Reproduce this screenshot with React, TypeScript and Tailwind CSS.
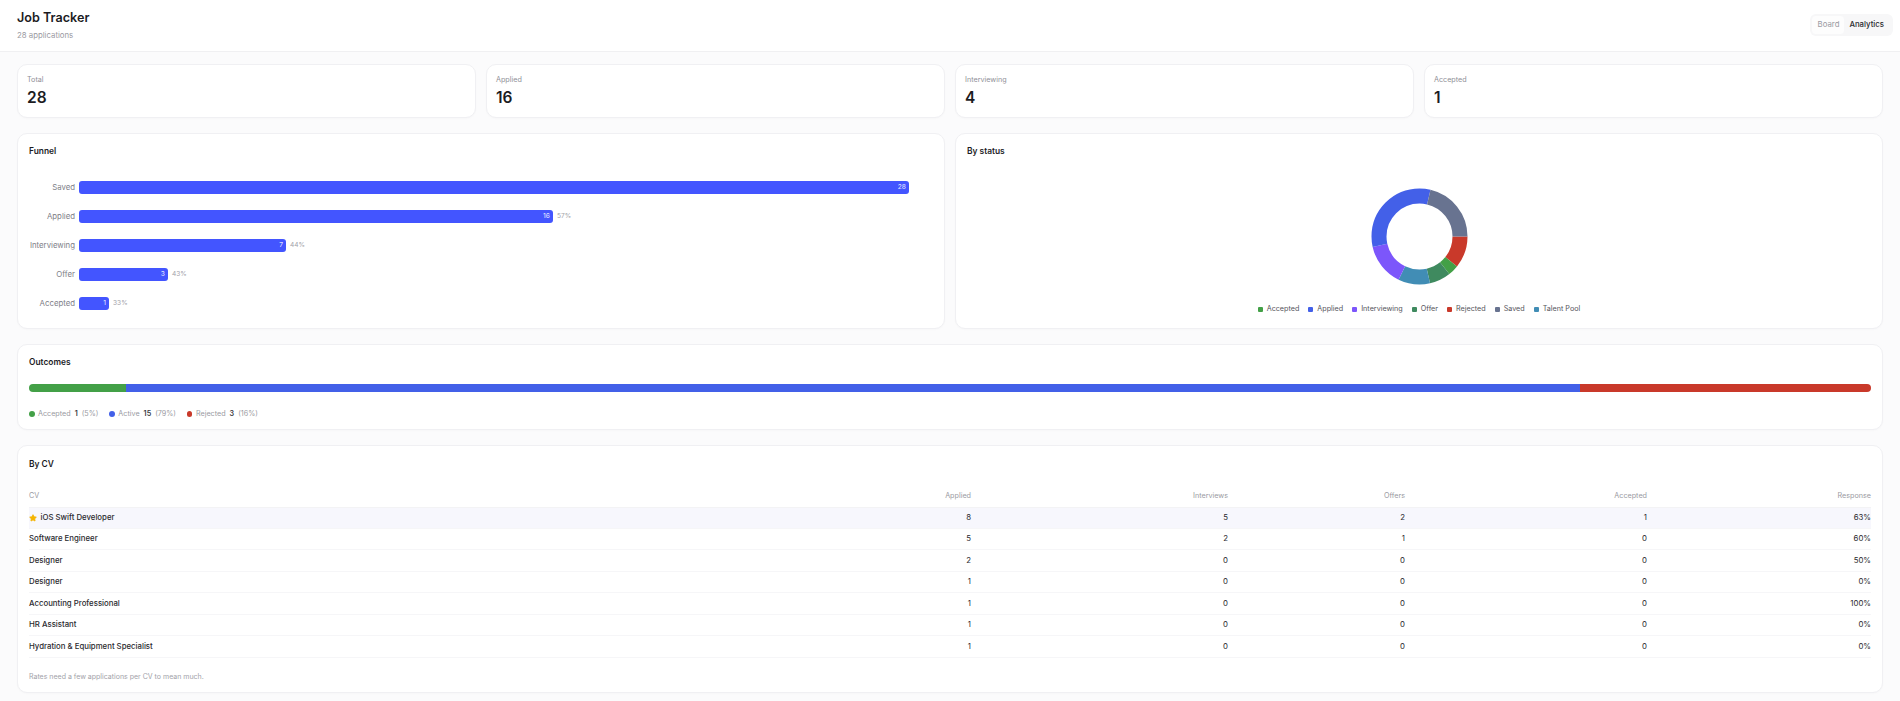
import { Star } from "lucide-react";

const stats = [
  { label: "Total", value: 28 },
  { label: "Applied", value: 16 },
  { label: "Interviewing", value: 4 },
  { label: "Accepted", value: 1 },
];

const funnel = [
  { label: "Saved", count: 28, width: 830, pct: "" },
  { label: "Applied", count: 16, width: 474, pct: "57%" },
  { label: "Interviewing", count: 7, width: 207, pct: "44%" },
  { label: "Offer", count: 3, width: 89, pct: "43%" },
  { label: "Accepted", count: 1, width: 30, pct: "33%" },
];

// clockwise from 3 o'clock, the way the chart draws them
const slices = [
  { name: "Rejected", n: 3, color: "#c9392a" },
  { name: "Accepted", n: 1, color: "#43a047" },
  { name: "Offer", n: 2, color: "#3f8a5f" },
  { name: "Talent Pool", n: 3, color: "#418db5" },
  { name: "Interviewing", n: 4, color: "#7c56fb" },
  { name: "Applied", n: 9, color: "#4360e8" },
  { name: "Saved", n: 6, color: "#687390" },
];

const legend = ["Accepted", "Applied", "Interviewing", "Offer", "Rejected", "Saved", "Talent Pool"];

const outcomes = [
  { label: "Accepted", n: 1, pct: "(5%)", color: "bg-[#43a047]" },
  { label: "Active", n: 15, pct: "(79%)", color: "bg-[#4360e8]" },
  { label: "Rejected", n: 3, pct: "(16%)", color: "bg-[#c9392a]" },
];

const rows = [
  { cv: "iOS Swift Developer", best: true, v: [8, 5, 2, 1, "63%"] },
  { cv: "Software Engineer", v: [5, 2, 1, 0, "60%"] },
  { cv: "Designer", v: [2, 0, 0, 0, "50%"] },
  { cv: "Designer", v: [1, 0, 0, 0, "0%"] },
  { cv: "Accounting Professional", v: [1, 0, 0, 0, "100%"] },
  { cv: "HR Assistant", v: [1, 0, 0, 0, "0%"] },
  { cv: "Hydration & Equipment Specialist", v: [1, 0, 0, 0, "0%"] },
];

const cardClass = "rounded-[10px] border border-[#f0f0f3] bg-white shadow-[0_1px_2px_rgba(0,0,0,0.02)]";

function Donut() {
  const r = 40.5;
  const circ = 2 * Math.PI * r;
  let done = 0;
  return (
    <svg width="97" height="97" viewBox="0 0 97 97">
      {slices.map((s) => {
        const len = (s.n / 28) * circ;
        const offset = -done;
        done += len;
        return (
          <circle
            key={s.name}
            cx="48.5"
            cy="48.5"
            r={r}
            fill="none"
            stroke={s.color}
            strokeWidth="15"
            strokeDasharray={`${len} ${circ - len}`}
            strokeDashoffset={offset}
          />
        );
      })}
    </svg>
  );
}

export default function App() {
  return (
    <div className="min-h-[701px] bg-[#fbfbfc] [font-family:Inter,sans-serif] text-[#1c1c1f]">
      <header className="flex h-[52px] items-center justify-between border-b border-[#f0f0f2] bg-white pl-[17px] pr-[7px]">
        <div>
          <h1 className="text-[12.6px] leading-[16px] font-semibold">Job Tracker</h1>
          <p className="mt-[3px] text-[7.8px] leading-[12px] text-[#9a9aa2]">28 applications</p>
        </div>
        <div className="-mt-[1px] flex h-[22px] items-center rounded-[6px] bg-[#f7f7f8] px-[2px] text-[7.8px]">
          <span className="flex h-[18px] items-center rounded-[4px] bg-[#fdfdfd] pl-[6px] pr-[5px] text-[#9a9aa2]">Board</span>
          <span className="flex h-[18px] items-center pl-[5px] pr-[7px] font-medium text-[#2a2a2e]">Analytics</span>
        </div>
      </header>

      <main className="flex flex-col gap-[15px] px-[17px] pt-[12px]">
        <div className="grid grid-cols-4 gap-[10px]">
          {stats.map((s) => (
            <div key={s.label} className={`${cardClass} h-[54px] px-[9px] pt-[9px]`}>
              <div className="text-[7.2px] leading-[12px] text-[#8f8f97]">{s.label}</div>
              <div className="mt-[2px] text-[15.5px] leading-[20px] font-semibold">{s.value}</div>
            </div>
          ))}
        </div>

        <div className="grid grid-cols-2 gap-[10px]">
          <section className={`${cardClass} h-[196px] px-[11px] pt-[11px]`}>
            <h2 className="text-[8.4px] leading-[12px] font-semibold">Funnel</h2>
            <div className="mt-[24px] flex flex-col gap-[16px]">
              {funnel.map((f) => (
                <div key={f.label} className="flex h-[13px] items-center">
                  <span className="w-[46px] text-right text-[7.8px] text-[#808088]">{f.label}</span>
                  <div
                    className="ml-[4px] flex h-[13px] items-center justify-end rounded-[3px] bg-[#4355ff] pr-[3px] text-[6.6px] font-medium text-[#d9ddff]"
                    style={{ width: f.width }}
                  >
                    {f.count}
                  </div>
                  {f.pct && <span className="ml-[4px] text-[6.6px] text-[#a2a2a9]">{f.pct}</span>}
                </div>
              ))}
            </div>
          </section>

          <section className={`${cardClass} h-[196px] px-[11px] pt-[11px]`}>
            <h2 className="text-[8.4px] leading-[12px] font-semibold">By status</h2>
            <div className="mt-[31px] flex justify-center">
              <Donut />
            </div>
            <div className="mt-[18px] flex justify-center gap-[9px] text-[7.2px] leading-[12px] text-[#55555c]">
              {legend.map((name) => (
                <span key={name} className="flex items-center gap-[4px]">
                  <i
                    className="h-[5px] w-[5px] rounded-[1px]"
                    style={{ background: slices.find((s) => s.name === name)?.color }}
                  />
                  {name}
                </span>
              ))}
            </div>
          </section>
        </div>

        <section className={`${cardClass} h-[86px] px-[11px] pt-[11px]`}>
          <h2 className="text-[8.4px] leading-[12px] font-semibold">Outcomes</h2>
          <div className="mt-[16px] flex h-[8px] overflow-hidden rounded-full">
            <div className="w-[97px] bg-[#43a047]" />
            <div className="flex-1 bg-[#4360e8]" />
            <div className="w-[291px] bg-[#c9392a]" />
          </div>
          <div className="mt-[16px] flex gap-[11px] text-[7.2px] leading-[12px] text-[#9a9aa2]">
            {outcomes.map((o) => (
              <span key={o.label} className="flex items-center">
                <i className={`mr-[3.5px] h-[5.5px] w-[5.5px] rounded-full ${o.color}`} />
                {o.label}
                <b className="ml-[4px] font-semibold text-[#3a3a3f]">{o.n}</b>
                <span className="ml-[4px]">{o.pct}</span>
              </span>
            ))}
          </div>
        </section>

        <section className={`${cardClass} h-[248px] px-[11px] pt-[12px]`}>
          <h2 className="text-[8.4px] leading-[12px] font-semibold">By CV</h2>
          <table className="mt-[17px] w-[1842px] table-fixed text-[7.8px]">
            <colgroup>
              <col className="w-[700px]" />
              <col className="w-[242px]" />
              <col className="w-[257px]" />
              <col className="w-[177px]" />
              <col className="w-[242px]" />
              <col className="w-[224px]" />
            </colgroup>
            <thead>
              <tr className="h-[20px] border-b border-[#f3f3f5] text-[7.2px] text-[#9a9aa2]">
                <th className="text-left font-normal">CV</th>
                <th className="text-right font-normal">Applied</th>
                <th className="text-right font-normal">Interviews</th>
                <th className="text-right font-normal">Offers</th>
                <th className="text-right font-normal">Accepted</th>
                <th className="text-right font-normal">Response</th>
              </tr>
            </thead>
            <tbody>
              {rows.map((row, i) => (
                <tr
                  key={i}
                  className={`h-[21.45px] border-b border-[#f6f6f8] text-[#2a2a2e] ${row.best ? "bg-[#f7f7fd]" : ""}`}
                >
                  <td>
                    <span className="flex items-center gap-[3.5px] font-medium">
                      {row.best && <Star size={8} className="fill-[#f5b400] text-[#f5b400]" />}
                      {row.cv}
                    </span>
                  </td>
                  {row.v.map((val, j) => (
                    <td key={j} className="text-right">
                      {val}
                    </td>
                  ))}
                </tr>
              ))}
            </tbody>
          </table>
          <p className="mt-[13px] text-[7px] leading-[12px] text-[#a2a2a9]">
            Rates need a few applications per CV to mean much.
          </p>
        </section>
      </main>
    </div>
  );
}
